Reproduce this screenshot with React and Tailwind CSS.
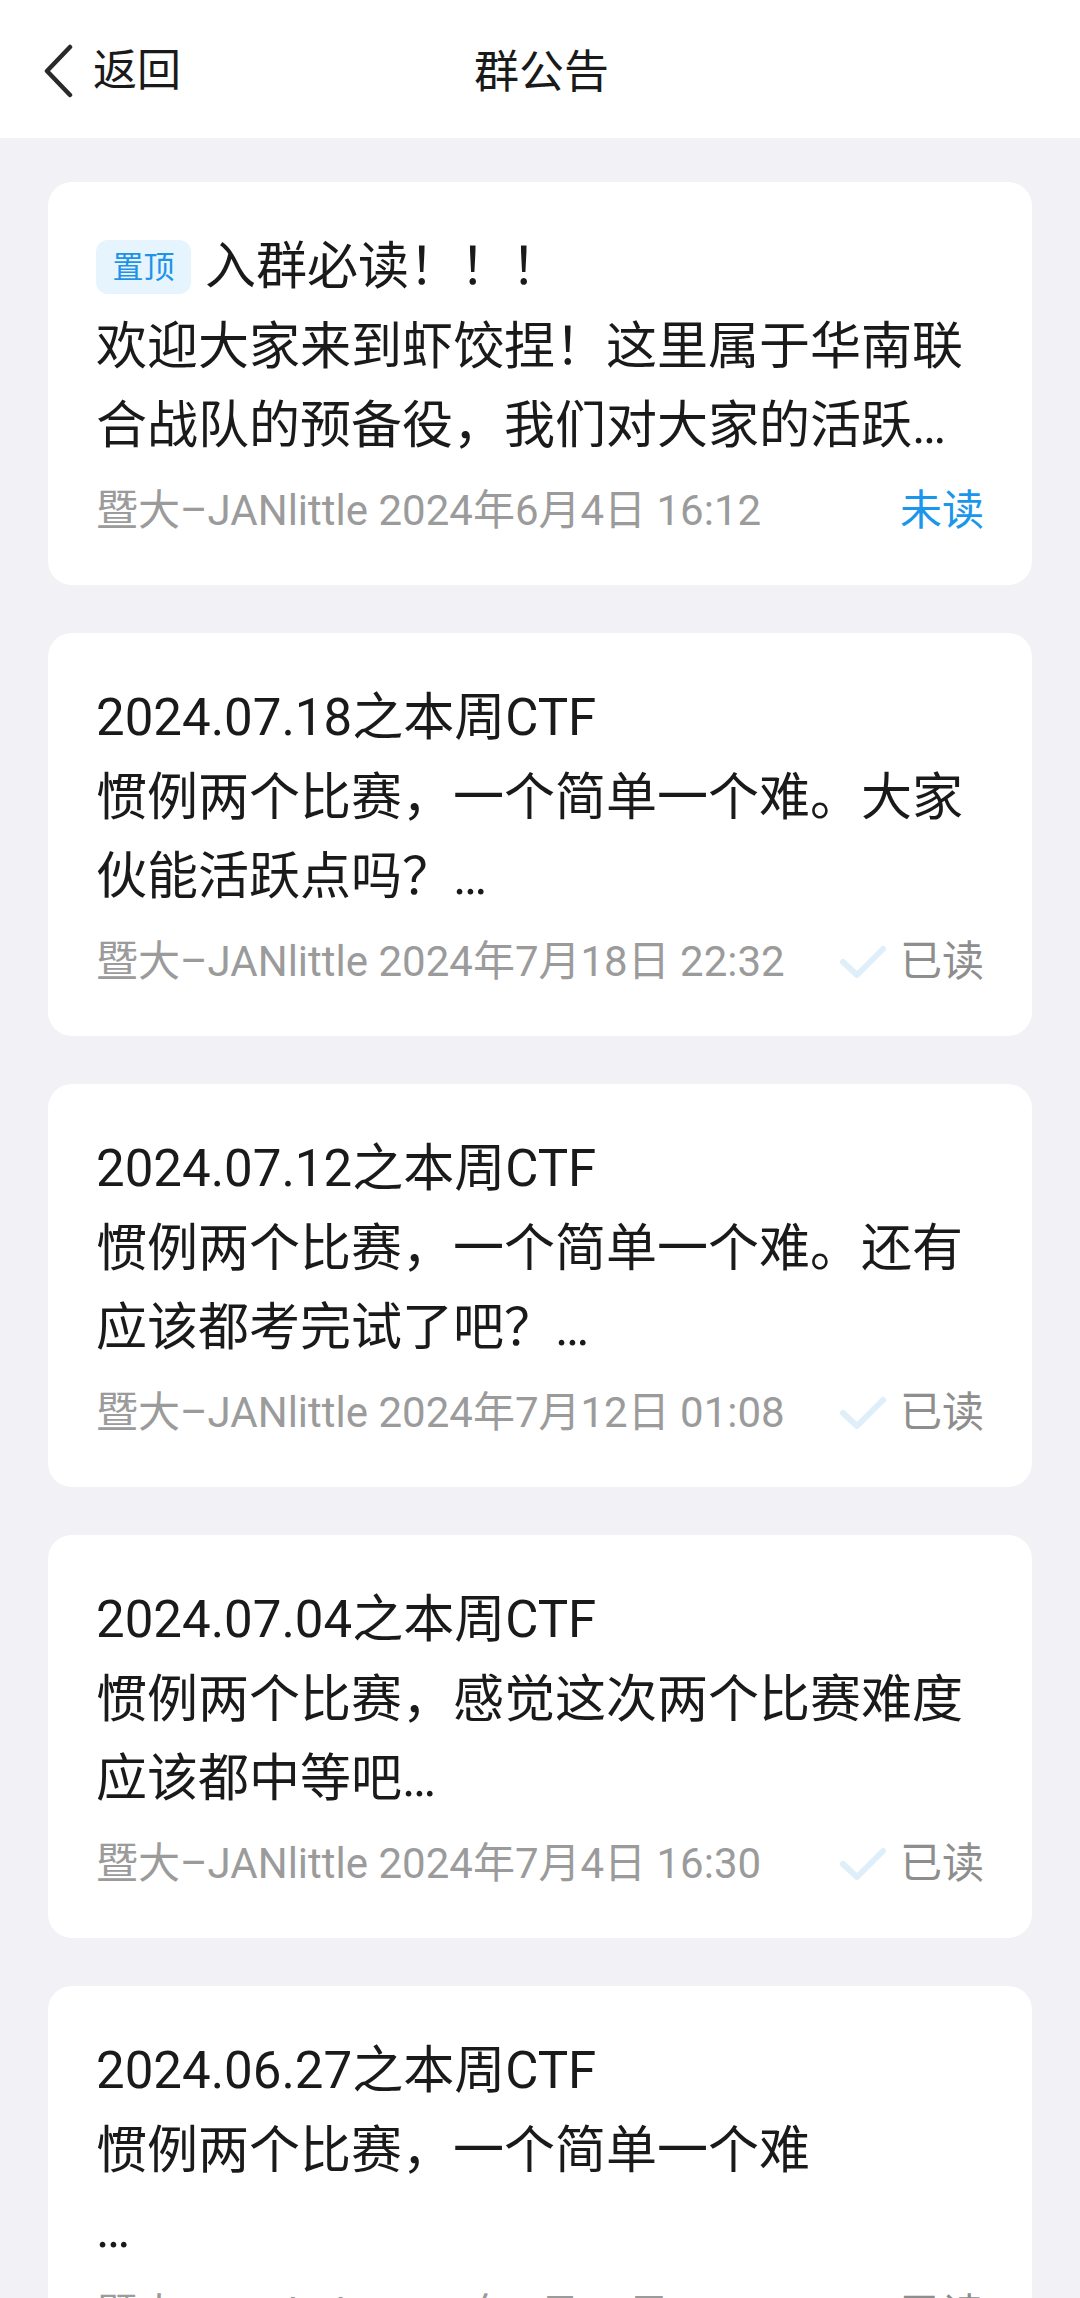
import React from "react";

const Check = () => (
  <svg width="46" height="34" viewBox="0 0 46 34" fill="none" className="shrink-0">
    <polyline points="3,17 17,30 43,4" stroke="#dfeff9" strokeWidth="6" strokeLinecap="round" strokeLinejoin="round" />
  </svg>
);

const notices = [
  {
    pinned: true,
    title: "入群必读！！！",
    lines: ["欢迎大家来到虾饺捏！这里属于华南联", "合战队的预备役，我们对大家的活跃…"],
    date: "2024年6月4日 16:12",
    read: false,
  },
  {
    title: "2024.07.18之本周CTF",
    lines: ["惯例两个比赛，一个简单一个难。大家", "伙能活跃点吗？…"],
    date: "2024年7月18日 22:32",
    read: true,
  },
  {
    title: "2024.07.12之本周CTF",
    lines: ["惯例两个比赛，一个简单一个难。还有", "应该都考完试了吧？…"],
    date: "2024年7月12日 01:08",
    read: true,
  },
  {
    title: "2024.07.04之本周CTF",
    lines: ["惯例两个比赛，感觉这次两个比赛难度", "应该都中等吧…"],
    date: "2024年7月4日 16:30",
    read: true,
  },
  {
    title: "2024.06.27之本周CTF",
    lines: ["惯例两个比赛，一个简单一个难", "…"],
    date: "2024年6月27日 20:15",
    read: true,
  },
];

function Card({ n }) {
  return (
    <div className="bg-white rounded-[24px] pl-[48px] pr-[48px] pt-[45px] pb-[46px]">
      <div className="flex items-center text-[51px] leading-[80px] text-[#1a1a1a]">
        {n.pinned && (
          <span className="mr-[14px] flex h-[54px] w-[95px] items-center justify-center rounded-[12px] bg-[#e6f4fe] text-[31px] leading-none text-[#1f93e8]">
            置顶
          </span>
        )}
        <span>{n.title}</span>
      </div>
      {n.lines.map((l, i) => (
        <div key={i} className="text-[51px] leading-[79px] text-[#1a1a1a] whitespace-nowrap">
          {l}
        </div>
      ))}
      <div className="mt-[18px] flex items-center justify-between text-[42px] leading-[56px] text-[#9b9b9b]">
        <span className="whitespace-nowrap">暨大–JANlittle {n.date}</span>
        {n.read ? (
          <span className="flex items-center gap-[14px] text-[#8e8e8e]">
            <Check />
            <span>已读</span>
          </span>
        ) : (
          <span className="text-[#1a96ea]">未读</span>
        )}
      </div>
    </div>
  );
}

export default function App() {
  return (
    <div className="min-h-screen bg-[#f2f2f6] font-[Roboto,'Noto_Sans_CJK_SC',sans-serif]">
      <header className="grid h-[138px] grid-cols-3 items-center bg-white pl-[43px] pr-[40px]">
        <div className="flex items-center gap-[20px] pt-[4px]">
          <svg width="30" height="54" viewBox="0 0 30 54" fill="none">
            <polyline points="27,3 4,27 27,51" stroke="#2a2a2a" strokeWidth="4.5" strokeLinecap="round" strokeLinejoin="round" />
          </svg>
          <span className="text-[44px] leading-none text-[#1a1a1a]">返回</span>
        </div>
        <div className="pt-[6px] text-center text-[45px] leading-none text-[#1a1a1a]">群公告</div>
        <div />
      </header>
      <main className="flex flex-col gap-[48px] px-[48px] pt-[44px] pb-[48px]">
        {notices.map((n, i) => (
          <Card key={i} n={n} />
        ))}
      </main>
    </div>
  );
}
